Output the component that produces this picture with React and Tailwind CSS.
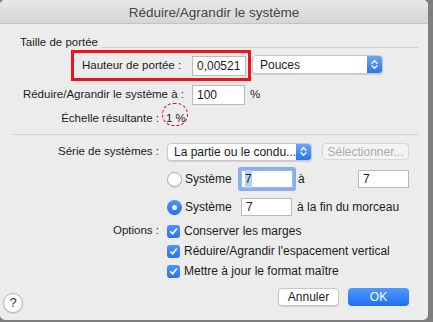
import React from "react";

function Chevrons() {
  return (
    <svg width="7" height="11" viewBox="0 0 7 11" fill="none">
      <path d="M1 4.2 L3.5 1.7 L6 4.2" stroke="white" strokeWidth="1.3" strokeLinecap="round" strokeLinejoin="round" />
      <path d="M1 6.8 L3.5 9.3 L6 6.8" stroke="white" strokeWidth="1.3" strokeLinecap="round" strokeLinejoin="round" />
    </svg>
  );
}

function Check() {
  return (
    <div className="w-[13px] h-[13px] rounded-[3px] bg-gradient-to-b from-[#4b92f9] to-[#2a74f3] flex items-center justify-center shrink-0">
      <svg width="9" height="9" viewBox="0 0 9 9" fill="none">
        <path d="M1.6 4.8 L3.6 6.9 L7.4 2" stroke="white" strokeWidth="1.6" strokeLinecap="round" strokeLinejoin="round" />
      </svg>
    </div>
  );
}

export default function App() {
  return (
    <div className="w-[433px] h-[322px] bg-[#7e7e7e] overflow-hidden font-['Liberation_Sans',Arial,sans-serif] text-[11.5px] text-[#1c1c1c]">
      <div className="w-[428px] h-[320px] bg-[#ececec] rounded-[5px] overflow-hidden flex flex-col">
        {/* Title bar */}
        <div className="h-[24px] shrink-0 bg-gradient-to-b from-[#e8e8e8] to-[#d5d5d5] border-b border-[#c3c3c3] flex items-center justify-center pt-[4px] text-[13.5px] text-[#454545]">
          Réduire/Agrandir le système
        </div>

        {/* Taille de portée */}
        <div className="mt-[12px] h-[14px] flex items-center pl-[20px]">
          <span>Taille de portée</span>
          <div className="flex-1 h-px bg-[#d2d2d2] ml-[3px] mr-[10px] self-end mb-[2px]" />
        </div>

        {/* Red box row */}
        <div className="h-[31px] flex items-start pl-[71px]">
          <div className="w-[180px] h-[31px] border-[3px] border-[#f0121a] flex items-center justify-between pl-[8px] pr-[2px]">
            <span>Hauteur de portée :</span>
            <div className="w-[54px] h-[20px] bg-white border border-[#b9b9b9] flex items-center pl-[4px] text-[12px]">0,00521</div>
          </div>
          <div className="ml-[1px] mt-[5px] w-[131px] h-[19px] bg-white rounded-[4px] border border-[#c9c9c9] shadow-[0_1px_1px_rgba(0,0,0,0.12)] flex items-center overflow-hidden">
            <span className="flex-1 pl-[7px] text-[12px]">Pouces</span>
            <div className="w-[15px] h-full bg-gradient-to-b from-[#6aa6fa] to-[#2c74f1] flex items-center justify-center">
              <Chevrons />
            </div>
          </div>
        </div>

        {/* Réduire/Agrandir row */}
        <div className="mt-[3px] h-[21px] flex items-center">
          <div className="w-[184px] text-right">Réduire/Agrandir le système à :</div>
          <div className="ml-[8px] w-[53px] h-[20px] bg-white border border-[#b9b9b9] flex items-center pl-[4px] text-[12px]">100</div>
          <span className="ml-[5px]">%</span>
        </div>

        {/* Échelle résultante */}
        <div className="mt-[5px] h-[18px] flex items-center">
          <div className="w-[159px] text-right">Échelle résultante :</div>
          <div className="ml-[7px] relative">
            <span>1 %</span>
            <div className="absolute left-[-4px] top-[-7px] w-[26px] h-[23px] rounded-full border border-dashed border-[#e3101a]" />
          </div>
        </div>

        {/* Separator */}
        <div className="mt-[6px] h-px bg-[#d2d2d2] ml-[12px] mr-[10px]" />

        {/* Série de systèmes */}
        <div className="mt-[7px] h-[19px] flex items-center">
          <div className="w-[159px] text-right">Série de systèmes :</div>
          <div className="ml-[8px] w-[145px] h-[18px] bg-white rounded-[4px] border border-[#c9c9c9] shadow-[0_1px_1px_rgba(0,0,0,0.12)] flex items-center overflow-hidden">
            <span className="flex-1 pl-[6px] text-[12px] whitespace-nowrap">La partie ou le condu...</span>
            <div className="w-[15px] h-full bg-gradient-to-b from-[#6aa6fa] to-[#2c74f1] flex items-center justify-center">
              <Chevrons />
            </div>
          </div>
          <div className="ml-[10px] w-[87px] h-[17px] bg-[#f4f4f4] rounded-[4px] border border-[#d6d6d6] flex items-center justify-center text-[#ababab] text-[12px]">
            Sélectionner...
          </div>
        </div>

        {/* Radio row 1 */}
        <div className="mt-[7px] h-[22px] flex items-center pl-[167px] pr-[19px]">
          <div className="w-[74px] flex items-center">
            <div className="w-[15px] h-[15px] rounded-full bg-white border border-[#ababab] shadow-[0_1px_1px_rgba(0,0,0,0.1)]" />
            <span className="ml-[3px] text-[12px]">Système</span>
          </div>
          <div className="w-[52px] h-[18px] bg-white border border-[#9ab8ec] rounded-[1px] shadow-[0_0_0_3px_#88aef0] flex items-center pl-[3px] text-[12px]">
            <span className="bg-[#b3d4fd]">7</span>
          </div>
          <span className="ml-[5px] text-[12px]">à</span>
          <div className="ml-auto w-[51px] h-[18px] bg-white border border-[#b9b9b9] flex items-center pl-[4px] text-[12px]">7</div>
        </div>

        {/* Radio row 2 */}
        <div className="mt-[6px] h-[22px] flex items-center pl-[167px]">
          <div className="w-[74px] flex items-center">
            <div className="w-[15px] h-[15px] rounded-full bg-gradient-to-b from-[#4e95f9] to-[#2370f3] flex items-center justify-center">
              <div className="w-[5px] h-[5px] rounded-full bg-white" />
            </div>
            <span className="ml-[3px] text-[12px]">Système</span>
          </div>
          <div className="w-[51px] h-[18px] bg-white border border-[#b9b9b9] flex items-center pl-[4px] text-[12px]">7</div>
          <span className="ml-[5px] text-[12px]">à la fin du morceau</span>
        </div>

        {/* Options */}
        <div className="mt-[3px] h-[20px] flex items-center">
          <div className="w-[159px] text-right">Options :</div>
          <div className="ml-[8px]"><Check /></div>
          <span className="ml-[4px] text-[12px]">Conserver les marges</span>
        </div>
        <div className="h-[20px] flex items-center pl-[167px]">
          <Check />
          <span className="ml-[4px] text-[12px]">Réduire/Agrandir l'espacement vertical</span>
        </div>
        <div className="h-[20px] flex items-center pl-[167px]">
          <Check />
          <span className="ml-[4px] text-[12px]">Mettre à jour le format maître</span>
        </div>

        {/* Buttons */}
        <div className="mt-[7px] flex items-start">
          <div className="ml-[3px] mt-[5px] w-[20px] h-[20px] rounded-full bg-white border border-[#b3b3b3] shadow-[0_1px_1px_rgba(0,0,0,0.12)] flex items-center justify-center text-[13px] text-[#333]">
            ?
          </div>
          <div className="ml-auto w-[61px] h-[18px] bg-white rounded-[4px] border border-[#c6c6c6] shadow-[0_1px_1px_rgba(0,0,0,0.12)] flex items-center justify-center text-[12px]">
            Annuler
          </div>
          <div className="ml-[9px] mr-[19px] w-[61px] h-[18px] rounded-[4px] bg-gradient-to-b from-[#4f98fa] to-[#1d6ef3] flex items-center justify-center text-white text-[12px]">
            OK
          </div>
        </div>
      </div>
    </div>
  );
}
